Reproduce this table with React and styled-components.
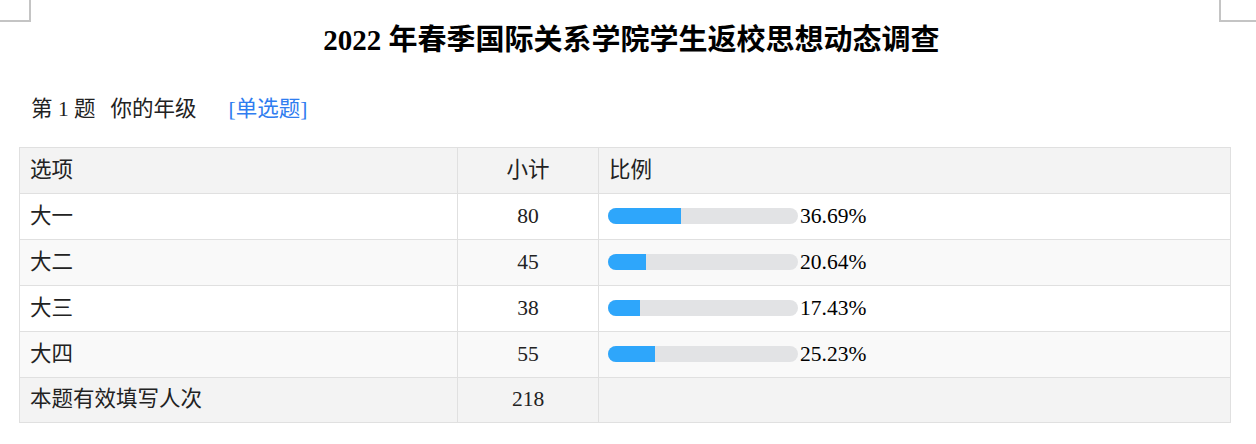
import styled, { createGlobalStyle } from "styled-components";

const GlobalStyle = createGlobalStyle`
  body {
    margin: 0;
    background: #fff;
    font-family: "Liberation Serif", "Noto Sans CJK SC", serif;
    color: #222;
  }
`;

const Page = styled.div`
  position: relative;
  width: 1256px;
  height: 444px;
  overflow: hidden;
  padding-top: 26px;
  box-sizing: border-box;

  &::before,
  &::after {
    content: "";
    position: absolute;
    top: 0;
    width: 29px;
    height: 20px;
    border-bottom: 2px solid #c4c4c4;
  }
  &::before {
    left: 0;
    border-right: 2px solid #c4c4c4;
  }
  &::after {
    left: 1219px;
    width: 37px;
    border-left: 2px solid #c4c4c4;
  }
`;

const Title = styled.h1`
  margin: 0;
  padding-left: 7px;
  text-align: center;
  font-size: 29px;
  line-height: 29px;
  font-weight: 700;
  color: #000;
`;

const Question = styled.div`
  display: flex;
  align-items: center;
  margin: 36px 0 0 31px;
  height: 30px;
  font-size: 21.5px;
  color: #222;
`;

const QNum = styled.span`
  margin-right: 15px;
`;

const QType = styled.span`
  margin-left: 32px;
  color: #2f7df0;
`;

const Table = styled.table`
  margin: 26px 0 0 19px;
  width: 1212px;
  border-collapse: collapse;
  table-layout: fixed;
  font-size: 21.5px;
  line-height: 1.2;
`;

const Row = styled.tr`
  background: ${(p) => p.$bg};
`;

const Cell = styled.td`
  height: ${(p) => (p.$short ? 44 : 45)}px;
  padding: 0 10px;
  border: 1px solid #e0e0e0;
  text-align: ${(p) => (p.$center ? "center" : "left")};
  vertical-align: middle;
  white-space: nowrap;
  font-weight: 400;
`;

const Ratio = styled.div`
  display: flex;
  align-items: center;
  margin-left: -1px;
`;

const Track = styled.div`
  width: 190px;
  height: 16px;
  border-radius: 8px;
  background: #e2e3e5;
  overflow: hidden;
  flex-shrink: 0;
`;

const Fill = styled.div`
  height: 100%;
  background: #2ea6fb;
`;

const Percent = styled.span`
  margin-left: 2px;
  color: #000;
`;

// bar: filled length in px, as drawn by the survey tool
const rows = [
  { label: "大一", count: 80, pct: 36.69, bar: 73 },
  { label: "大二", count: 45, pct: 20.64, bar: 38 },
  { label: "大三", count: 38, pct: 17.43, bar: 32 },
  { label: "大四", count: 55, pct: 25.23, bar: 47 },
];

export default function App() {
  return (
    <Page>
      <GlobalStyle />
      <Title>2022 年春季国际关系学院学生返校思想动态调查</Title>
      <Question>
        <QNum>第 1 题</QNum>
        <span>你的年级</span>
        <QType>[单选题]</QType>
      </Question>
      <Table>
        <colgroup>
          <col style={{ width: 438 }} />
          <col style={{ width: 141 }} />
          <col />
        </colgroup>
        <thead>
          <Row $bg="#f3f3f3">
            <Cell as="th">选项</Cell>
            <Cell as="th" $center>小计</Cell>
            <Cell as="th">比例</Cell>
          </Row>
        </thead>
        <tbody>
          {rows.map((r, i) => (
            <Row key={r.label} $bg={i % 2 ? "#f9f9f9" : "#fff"}>
              <Cell>{r.label}</Cell>
              <Cell $center>{r.count}</Cell>
              <Cell>
                <Ratio>
                  <Track>
                    <Fill style={{ width: r.bar }} />
                  </Track>
                  <Percent>{r.pct.toFixed(2)}%</Percent>
                </Ratio>
              </Cell>
            </Row>
          ))}
          <Row $bg="#f3f3f3">
            <Cell $short>本题有效填写人次</Cell>
            <Cell $short $center>218</Cell>
            <Cell $short />
          </Row>
        </tbody>
      </Table>
    </Page>
  );
}
